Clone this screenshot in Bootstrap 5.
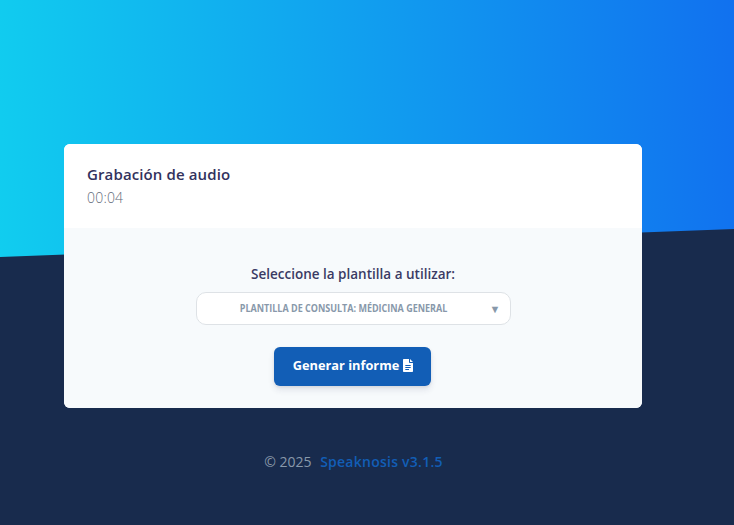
<!DOCTYPE html>
<html lang="es">
<head>
<meta charset="utf-8">
<title>Grabación de audio</title>
<link href="https://cdn.jsdelivr.net/npm/bootstrap@5.3.0/dist/css/bootstrap.min.css" rel="stylesheet">
<style>
html,body{height:100%}
body{font-family:"Open Sans",sans-serif;background:#182b4d;overflow:hidden}
.scene{position:relative;height:525px;padding:144px 92px 0 64px}
.sky{position:absolute;inset:0 0 auto 0;height:258px;background:linear-gradient(87deg,#11cdef 0,#1171ef 100%);clip-path:polygon(0 0,100% 0,100% 229px,0 257px)}
.panel{position:relative;border:0;border-radius:6px;overflow:hidden}
.panel-top{height:84px;padding:20px 23px 0;background:#fff}
.panel-title{font-size:15px;font-weight:570;line-height:20px;color:#32325d;letter-spacing:.12px;margin:0}
.panel-time{font-size:14px;font-weight:300;line-height:20px;color:#5f6b7a;letter-spacing:.2px;margin-top:4px}
.panel-body{height:180px;padding-top:37px;background:#f7fafc}
.pick-label{font-size:13.5px;font-weight:600;line-height:19px;color:#3a3a64;margin-bottom:8px}
.pick{width:315px;height:33px;border:1px solid #dee2e6;border-radius:10px;background:#fff;padding:0 9px 0 0}
.pick-text{font-size:10px;font-weight:700;color:#8898aa;flex-grow:1;text-align:center;transform:scaleX(.9)}
.pick-arrow{font-size:11px;color:#8898aa;line-height:1}
.go{margin-top:22px;margin-right:2px;width:157px;height:39px;border:0;border-radius:6px;background:#125eb6;color:#fff;font-size:12.8px;font-weight:700;box-shadow:0 4px 6px rgba(50,50,93,.11),0 1px 3px rgba(0,0,0,.08);padding:0 0 2px 2px}
.foot{position:relative;margin-top:44px;font-size:14px;line-height:20px;color:#8898aa;padding-left:1px}
.foot a{color:#125eb6;font-weight:600;text-decoration:none;margin-left:5px;letter-spacing:.25px}
</style>
</head>
<body>
<div class="scene">
  <div class="sky"></div>
  <div class="card panel">
    <div class="panel-top">
      <h3 class="panel-title">Grabación de audio</h3>
      <div class="panel-time">00:04</div>
    </div>
    <div class="panel-body d-flex flex-column align-items-center">
      <div class="pick-label">Seleccione la plantilla a utilizar:</div>
      <div class="pick d-flex align-items-center">
        <span class="pick-text">PLANTILLA DE CONSULTA: MÉDICINA GENERAL</span>
        <span class="pick-arrow">▼</span>
      </div>
      <button type="button" class="btn go d-inline-flex align-items-center justify-content-center gap-1">Generar informe
        <svg width="10" height="13" viewBox="0 0 10 13" aria-hidden="true"><path fill="#fff" fill-rule="evenodd" d="M1 0h5v3.2c0 .4.4.8.8.8H10v8c0 .6-.4 1-1 1H1c-.6 0-1-.4-1-1V1c0-.6.4-1 1-1zM7 0l3 3H7V0zM2.3 6v1h5.4V6H2.3zm0 2v1h5.4V8H2.3zm0 2v1h3.7v-1H2.3z"/></svg>
      </button>
    </div>
  </div>
  <div class="foot text-center">© 2025 <a href="#">Speaknosis v3.1.5</a></div>
</div>
<script src="https://cdn.jsdelivr.net/npm/bootstrap@5.3.0/dist/js/bootstrap.bundle.min.js"></script>
</body>
</html>
